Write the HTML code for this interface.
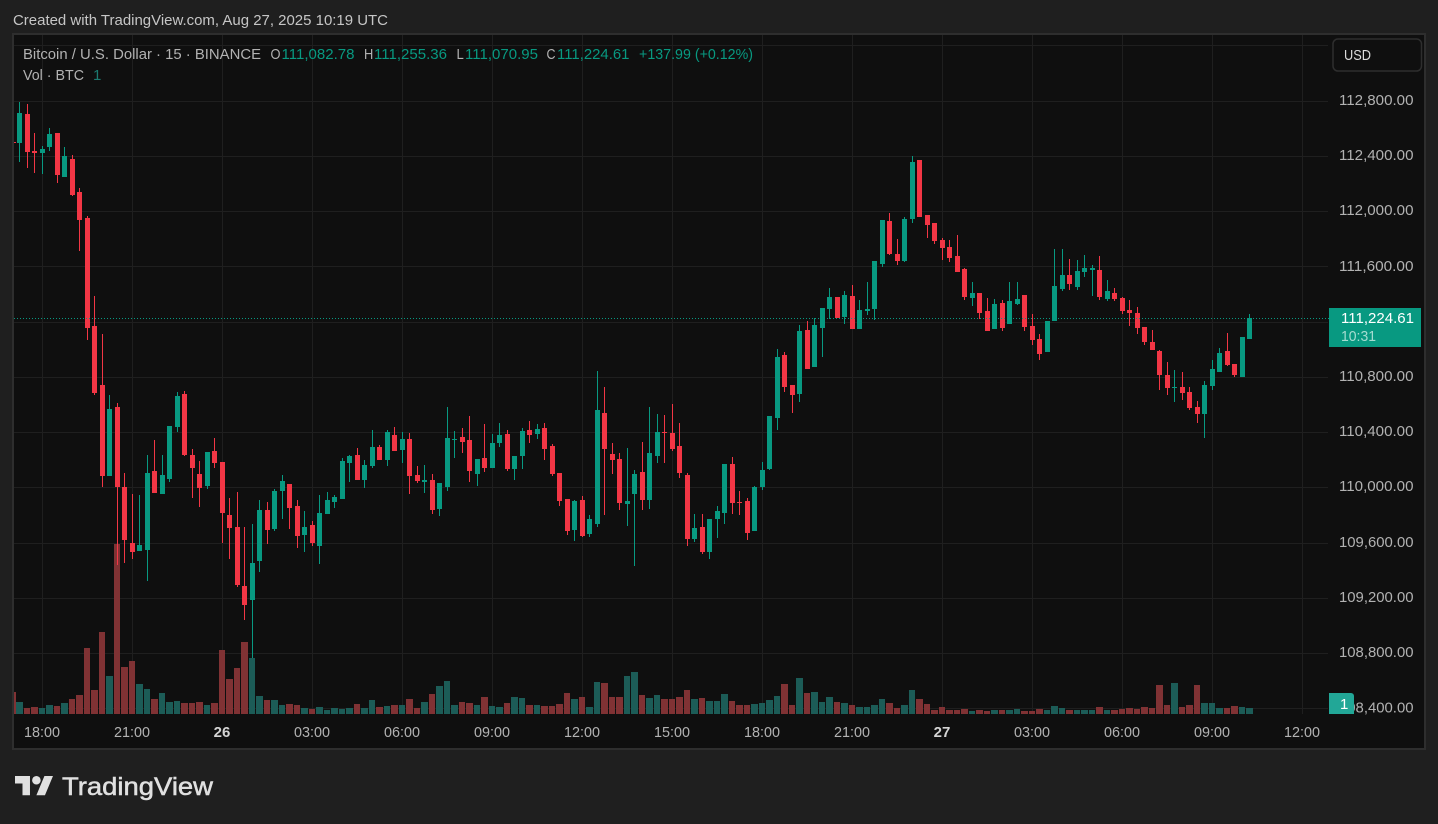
<!DOCTYPE html>
<html lang="en">
<head>
<meta charset="utf-8">
<title>Bitcoin / U.S. Dollar chart</title>
<style>
html,body{margin:0;padding:0;background:#1f1f1f;width:1438px;height:824px;overflow:hidden}
svg{display:block}
text{font-family:"Liberation Sans",sans-serif;font-size:15px}
.p{fill:#b2b2b2}
.l{fill:#b2b2b2}
.v{fill:#089981}
.t{fill:#b2b2b2;text-anchor:middle}
.b{font-weight:700;fill:#d4d4d4}
</style>
</head>
<body>
<svg width="1438" height="824" viewBox="0 0 1438 824" xmlns="http://www.w3.org/2000/svg">
<rect x="0" y="0" width="1438" height="824" fill="#1f1f1f"/>
<rect x="12" y="33" width="1414" height="717" fill="#2e2e2e"/>
<rect x="14" y="35" width="1410" height="713" fill="#0f0f0f"/>

<g shape-rendering="crispEdges">
<path stroke="#1f1f1f" stroke-width="1" fill="none" d="M14 45.5H1328M14 101.5H1328M14 156.5H1328M14 211.5H1328M14 266.5H1328M14 322.5H1328M14 377.5H1328M14 432.5H1328M14 487.5H1328M14 543.5H1328M14 598.5H1328M14 653.5H1328M14 708.5H1328"/>
<path stroke="#1f1f1f" stroke-width="1" fill="none" d="M42.5 35V714M132.5 35V714M222.5 35V714M312.5 35V714M402.5 35V714M492.5 35V714M582.5 35V714M672.5 35V714M762.5 35V714M852.5 35V714M942.5 35V714M1032.5 35V714M1122.5 35V714M1212.5 35V714M1302.5 35V714"/>

<rect x="14" y="692" width="2" height="22" fill="#803234"/>
<path fill="none" stroke="#803234" stroke-width="7" d="M34.5 707V714M79.5 695V714M94.5 690V714M124.5 667V714M154.5 699V714M184.5 703V714M199.5 702V714M214.5 703V714M229.5 679V714M244.5 642V714M289.5 704V714M379.5 707V714M394.5 705V714M409.5 699V714M469.5 703V714M484.5 697V714M529.5 705V714M544.5 706V714M559.5 704V714M604.5 683V714M619.5 697V714M664.5 699V714M679.5 697V714M739.5 705V714M784.5 684V714M889.5 703V714M919.5 699V714M934.5 710V714M949.5 710V714M964.5 709V714M979.5 710V714M1024.5 711V714M1039.5 709V714M1069.5 710V714M1099.5 707V714M1114.5 710V714M1129.5 708V714M1144.5 707V714M1159.5 685V714M1189.5 705V714M1234.5 706V714"/>
<path fill="none" stroke="#803234" stroke-width="6" d="M27 708V714M57 706V714M72 699V714M87 648V714M102 632V714M117 544V714M132 661V714M192 703V714M222 650V714M237 668V714M267 700V714M297 705V714M312 709V714M357 704V714M417 708V714M432 694V714M462 702V714M507 703V714M552 706V714M567 693V714M582 697V714M612 697V714M642 695V714M672 699V714M687 690V714M702 698V714M732 701V714M747 705V714M792 705V714M807 693V714M837 702V714M852 705V714M897 708V714M927 704V714M942 707V714M957 710V714M987 711V714M1002 710V714M1032 711V714M1122 709V714M1137 709V714M1152 708V714M1167 705V714M1182 707V714M1197 685V714M1227 708V714"/>
<path fill="none" stroke="#1c5c57" stroke-width="7" d="M19.5 702V714M49.5 705V714M64.5 703V714M109.5 676V714M139.5 684V714M169.5 702V714M259.5 696V714M274.5 700V714M304.5 708V714M319.5 707V714M334.5 708V714M349.5 708V714M364.5 708V714M424.5 702V714M439.5 686V714M454.5 705V714M499.5 707V714M514.5 697V714M574.5 699V714M589.5 707V714M634.5 672V714M649.5 698V714M694.5 699V714M709.5 701V714M724.5 694V714M754.5 704V714M769.5 700V714M799.5 678V714M814.5 692V714M829.5 697V714M844.5 703V714M859.5 707V714M874.5 705V714M904.5 705V714M994.5 710V714M1009.5 710V714M1054.5 706V714M1084.5 710V714M1174.5 683V714M1204.5 703V714M1219.5 708V714M1249.5 708V714"/>
<path fill="none" stroke="#1c5c57" stroke-width="6" d="M42 708V714M147 689V714M162 693V714M177 701V714M207 705V714M252 658V714M282 705V714M327 710V714M342 709V714M372 700V714M387 706V714M402 705V714M447 681V714M477 705V714M492 706V714M522 698V714M537 705V714M597 682V714M627 676V714M657 695V714M717 701V714M762 703V714M777 696V714M822 702V714M867 707V714M882 699V714M912 690V714M972 711V714M1017 709V714M1047 710V714M1062 708V714M1077 710V714M1092 710V714M1107 710V714M1212 703V714M1242 707V714"/>

<rect x="14" y="142" width="2" height="1" fill="#f23645"/>

<!-- green wicks -->
<path fill="none" stroke="#089981" stroke-width="1" d="M19.5 102V162M42.5 146V174M49.5 128V151M64.5 147V177M109.5 395V476M139.5 495V551M147.5 455V581M162.5 455V494M169.5 426V482M177.5 392V432M207.5 452V489M252.5 524V658M259.5 500V572M274.5 489V531M282.5 475V519M304.5 511V552M319.5 495V564M327.5 492V514M334.5 495V508M342.5 458V499M349.5 455V482M364.5 460V488M372.5 430V468M387.5 430V466M402.5 432V463M424.5 465V493M439.5 483V516M447.5 407V491M454.5 431V458M477.5 459V486M492.5 434V468M499.5 423V447M514.5 456V480M522.5 428V469M537.5 424V439M574.5 500V541M589.5 515V537M597.5 371V527M627.5 448V526M634.5 470V566M649.5 407V509M657.5 414V463M694.5 514V542M709.5 519V559M717.5 506V538M724.5 464V524M754.5 486V531M762.5 462V490M769.5 416V470M777.5 349V430M799.5 325V402M814.5 318V367M822.5 308V357M829.5 288V319M844.5 291V324M859.5 300V329M867.5 282V315M874.5 261V320M882.5 220V267M904.5 217V262M912.5 156V223M972.5 282V306M994.5 299V329M1009.5 282V324M1017.5 282V305M1047.5 321V352M1054.5 249V321M1062.5 249V291M1077.5 260V290M1084.5 255V277M1092.5 265V296M1107.5 280V301M1174.5 370V402M1204.5 381V438M1212.5 360V390M1219.5 348V372M1242.5 337V377M1249.5 314V339"/>
<!-- green bodies -->
<path fill="none" stroke="#089981" stroke-width="5" d="M19.5 113V143M42.5 149V153M49.5 134V147M64.5 156V177M109.5 409V476M139.5 545V551M147.5 473V550M162.5 475V494M169.5 426V479M177.5 396V427M207.5 452V486M252.5 563V600M259.5 510V561M274.5 491V529M282.5 481V491M304.5 527V535M319.5 513V546M327.5 500V514M334.5 497V502M342.5 461V499M349.5 456V463M364.5 465V480M372.5 447V466M387.5 432V460M402.5 439V450M424.5 480V482M439.5 483V509M447.5 438V487M454.5 439V440M477.5 459V474M492.5 443V468M499.5 435V443M514.5 456V469M522.5 431V456M537.5 429V434M574.5 501V530M589.5 519V534M597.5 410V524M627.5 501V504M634.5 474V494M649.5 453V500M657.5 432V456M694.5 528V539M709.5 519V552M717.5 511V519M724.5 464V513M754.5 487V531M762.5 470V487M769.5 416V469M777.5 357V418M799.5 331V394M814.5 325V367M822.5 308V328M829.5 297V309M844.5 295V317M859.5 310V329M867.5 309V311M874.5 261V309M882.5 220V264M904.5 219V261M912.5 162V219M972.5 293V298M994.5 304V329M1009.5 301V324M1017.5 299V304M1047.5 321V352M1054.5 286V321M1062.5 275V289M1077.5 271V287M1084.5 268V272M1092.5 268V270M1107.5 291V299M1174.5 387V388M1204.5 385V414M1212.5 369V386M1219.5 353V372M1242.5 337V377M1249.5 318V339"/>
<!-- red wicks -->
<path fill="none" stroke="#f23645" stroke-width="1" d="M27.5 104V168M34.5 133V173M57.5 133V183M72.5 155V196M79.5 188V251M87.5 216V340M94.5 296V395M102.5 334V487M117.5 403V565M124.5 473V563M132.5 494V559M154.5 440V493M184.5 391V456M192.5 449V498M199.5 461V507M214.5 438V468M222.5 462V543M229.5 498V559M237.5 492V587M244.5 527V620M267.5 502V544M289.5 484V529M297.5 500V548M312.5 521V546M357.5 448V480M379.5 445V460M394.5 427V451M409.5 433V494M417.5 466V483M432.5 474V514M462.5 428V453M469.5 416V482M484.5 424V472M507.5 430V471M529.5 421V443M544.5 423V460M552.5 444V476M559.5 473V506M567.5 499V535M582.5 496V537M604.5 387V515M612.5 443V474M619.5 453V510M642.5 442V510M664.5 415V463M672.5 404V451M679.5 423V478M687.5 473V546M702.5 514V554M732.5 457V514M739.5 491V515M747.5 498V540M784.5 352V392M792.5 385V413M807.5 321V369M837.5 297V318M852.5 285V329M889.5 213V255M897.5 239V265M919.5 160V217M927.5 215V238M934.5 223V244M942.5 238V260M949.5 240V262M957.5 235V272M964.5 268V300M979.5 293V319M987.5 298V331M1002.5 300V331M1024.5 295V331M1032.5 314V345M1039.5 334V360M1069.5 259V290M1099.5 256V300M1114.5 288V301M1122.5 297V314M1129.5 300V326M1137.5 307V334M1144.5 327V345M1152.5 330V350M1159.5 350V390M1167.5 362V395M1182.5 372V400M1189.5 387V410M1197.5 401V423M1227.5 333V366M1234.5 364V377"/>
<!-- red bodies -->
<path fill="none" stroke="#f23645" stroke-width="5" d="M27.5 114V152M34.5 151V153M57.5 133V175M72.5 159V195M79.5 192V220M87.5 218V328M94.5 326V393M102.5 385V476M117.5 407V487M124.5 487V540M132.5 543V552M154.5 471V493M184.5 394V455M192.5 455V468M199.5 474V488M214.5 451V463M222.5 462V513M229.5 515V528M237.5 527V585M244.5 586V605M267.5 510V530M289.5 484V508M297.5 506V536M312.5 525V543M357.5 455V480M379.5 447V460M394.5 435V451M409.5 439V476M417.5 475V481M432.5 480V510M462.5 437V442M469.5 440V471M484.5 458V468M507.5 434V469M529.5 430V435M544.5 428V449M552.5 446V474M559.5 473V501M567.5 499V531M582.5 500V536M604.5 413V449M612.5 454V460M619.5 459V503M642.5 472V500M664.5 432V433M672.5 433V449M679.5 446V473M687.5 475V539M702.5 527V552M732.5 464V503M739.5 502V503M747.5 501V533M784.5 355V387M792.5 385V395M807.5 330V369M837.5 297V318M852.5 296V329M889.5 221V254M897.5 254V261M919.5 160V217M927.5 215V225M934.5 223V241M942.5 240V248M949.5 247V258M957.5 256V272M964.5 269V297M979.5 293V313M987.5 311V331M1002.5 303V328M1024.5 295V327M1032.5 326V340M1039.5 339V354M1069.5 275V284M1099.5 270V297M1114.5 293V299M1122.5 298V311M1129.5 310V313M1137.5 313V328M1144.5 327V342M1152.5 342V350M1159.5 351V375M1167.5 375V388M1182.5 387V393M1189.5 392V408M1197.5 407V414M1227.5 351V365M1234.5 364V375"/>

<path fill="none" stroke="#089981" stroke-width="1" stroke-dasharray="1 2" d="M14 318.5H1329"/>
</g>

<!-- title -->
<text x="13" y="25" textLength="375" lengthAdjust="spacingAndGlyphs" fill="#c6c6c6">Created with TradingView.com, Aug 27, 2025 10:19 UTC</text>

<!-- legend -->
<text x="23" y="59" textLength="238" lengthAdjust="spacingAndGlyphs" class="l">Bitcoin / U.S. Dollar · 15 · BINANCE</text>
<text x="270.5" y="59" textLength="10" lengthAdjust="spacingAndGlyphs" class="l">O</text>
<text x="281.5" y="59" textLength="73" lengthAdjust="spacingAndGlyphs" class="v">111,082.78</text>
<text x="364" y="59" textLength="9.3" lengthAdjust="spacingAndGlyphs" class="l">H</text>
<text x="374" y="59" textLength="73" lengthAdjust="spacingAndGlyphs" class="v">111,255.36</text>
<text x="456.5" y="59" textLength="7.3" lengthAdjust="spacingAndGlyphs" class="l">L</text>
<text x="465" y="59" textLength="73" lengthAdjust="spacingAndGlyphs" class="v">111,070.95</text>
<text x="546.5" y="59" textLength="9" lengthAdjust="spacingAndGlyphs" class="l">C</text>
<text x="557" y="59" textLength="72.5" lengthAdjust="spacingAndGlyphs" class="v">111,224.61</text>
<text x="639" y="59" textLength="114" lengthAdjust="spacingAndGlyphs" class="v">+137.99 (+0.12%)</text>
<text x="23" y="80" textLength="61" lengthAdjust="spacingAndGlyphs" class="l">Vol · BTC</text>
<text x="93" y="80" fill="#1c7a70">1</text>

<!-- USD -->
<rect x="1333" y="39" width="88.5" height="32" rx="5" fill="#0f0f0f" stroke="#2e2e2e" stroke-width="1.5"/>
<text x="1344" y="60" textLength="27" lengthAdjust="spacingAndGlyphs" fill="#dcdcdc">USD</text>

<!-- price scale -->
<text class="p" x="1339" y="105" textLength="74.5" lengthAdjust="spacingAndGlyphs">112,800.00</text>
<text class="p" x="1339" y="160" textLength="74.5" lengthAdjust="spacingAndGlyphs">112,400.00</text>
<text class="p" x="1339" y="215" textLength="74.5" lengthAdjust="spacingAndGlyphs">112,000.00</text>
<text class="p" x="1339" y="271" textLength="74.5" lengthAdjust="spacingAndGlyphs">111,600.00</text>
<text class="p" x="1339" y="381" textLength="74.5" lengthAdjust="spacingAndGlyphs">110,800.00</text>
<text class="p" x="1339" y="436" textLength="74.5" lengthAdjust="spacingAndGlyphs">110,400.00</text>
<text class="p" x="1339" y="491" textLength="74.5" lengthAdjust="spacingAndGlyphs">110,000.00</text>
<text class="p" x="1339" y="547" textLength="74.5" lengthAdjust="spacingAndGlyphs">109,600.00</text>
<text class="p" x="1339" y="602" textLength="74.5" lengthAdjust="spacingAndGlyphs">109,200.00</text>
<text class="p" x="1339" y="657" textLength="74.5" lengthAdjust="spacingAndGlyphs">108,800.00</text>
<text class="p" x="1339" y="712.5" textLength="74.5" lengthAdjust="spacingAndGlyphs">108,400.00</text>

<!-- price tag -->
<rect x="1329" y="308" width="92" height="39" fill="#089981"/>
<text x="1341" y="323" textLength="73" lengthAdjust="spacingAndGlyphs" fill="#ffffff">111,224.61</text>
<text x="1341" y="341" textLength="35" lengthAdjust="spacingAndGlyphs" fill="#a6dcd1">10:31</text>

<!-- volume tag -->
<path d="M1329 693H1351a3 3 0 0 1 3 3V714H1329Z" fill="#22a797"/>
<text x="1340" y="709" fill="#ffffff">1</text>

<!-- time scale -->
<text class="t" x="24" y="737" textLength="36" lengthAdjust="spacingAndGlyphs" style="text-anchor:start">18:00</text>
<text class="t" x="114" y="737" textLength="36" lengthAdjust="spacingAndGlyphs" style="text-anchor:start">21:00</text>
<text class="t b" x="222" y="737">26</text>
<text class="t" x="294" y="737" textLength="36" lengthAdjust="spacingAndGlyphs" style="text-anchor:start">03:00</text>
<text class="t" x="384" y="737" textLength="36" lengthAdjust="spacingAndGlyphs" style="text-anchor:start">06:00</text>
<text class="t" x="474" y="737" textLength="36" lengthAdjust="spacingAndGlyphs" style="text-anchor:start">09:00</text>
<text class="t" x="564" y="737" textLength="36" lengthAdjust="spacingAndGlyphs" style="text-anchor:start">12:00</text>
<text class="t" x="654" y="737" textLength="36" lengthAdjust="spacingAndGlyphs" style="text-anchor:start">15:00</text>
<text class="t" x="744" y="737" textLength="36" lengthAdjust="spacingAndGlyphs" style="text-anchor:start">18:00</text>
<text class="t" x="834" y="737" textLength="36" lengthAdjust="spacingAndGlyphs" style="text-anchor:start">21:00</text>
<text class="t b" x="942" y="737">27</text>
<text class="t" x="1014" y="737" textLength="36" lengthAdjust="spacingAndGlyphs" style="text-anchor:start">03:00</text>
<text class="t" x="1104" y="737" textLength="36" lengthAdjust="spacingAndGlyphs" style="text-anchor:start">06:00</text>
<text class="t" x="1194" y="737" textLength="36" lengthAdjust="spacingAndGlyphs" style="text-anchor:start">09:00</text>
<text class="t" x="1284" y="737" textLength="36" lengthAdjust="spacingAndGlyphs" style="text-anchor:start">12:00</text>

<!-- logo -->
<g fill="#e0e0e0" transform="translate(15 771.7) scale(1.07)">
<path d="M14 22H7V11H0V4h14v18zM28 22h-8l7.5-18h8L28 22z"/>
<circle cx="20" cy="8" r="4"/>
</g>
<text x="62" y="795" textLength="151" lengthAdjust="spacingAndGlyphs" fill="#e0e0e0" stroke="#e0e0e0" stroke-width=".5" style="font-size:25px">TradingView</text>
</svg>
</body>
</html>
